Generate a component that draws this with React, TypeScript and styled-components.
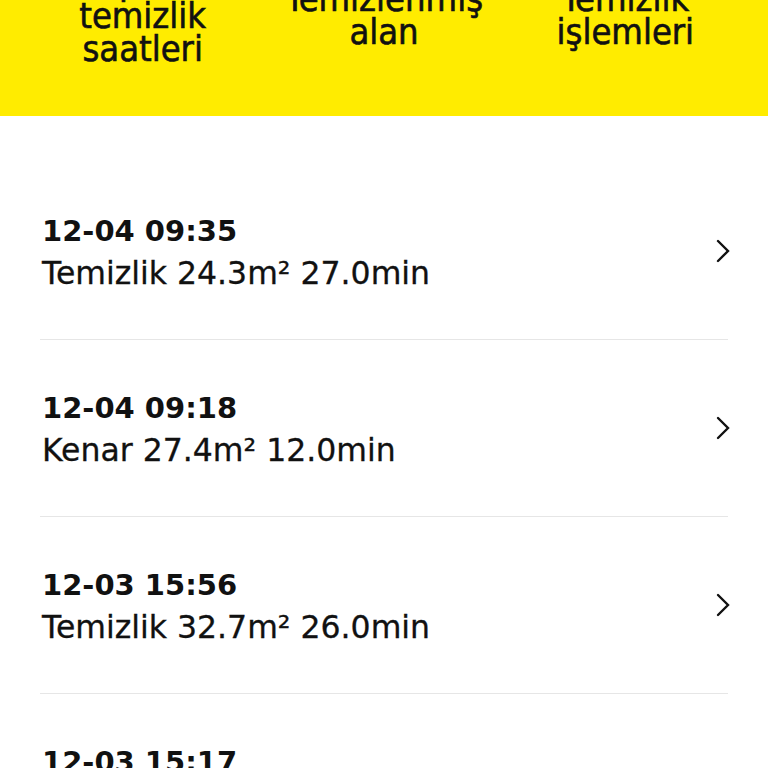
import styled, { createGlobalStyle } from 'styled-components';

const records = [
	{ time: '12-04 09:35', mode: 'Temizlik', area: '24.3', minutes: '27.0' },
	{ time: '12-04 09:18', mode: 'Kenar', area: '27.4', minutes: '12.0' },
	{ time: '12-03 15:56', mode: 'Temizlik', area: '32.7', minutes: '26.0' },
	{ time: '12-03 15:17', mode: 'Temizlik', area: '30.1', minutes: '25.0' },
];

const stats = [
	['Toplam', 'temizlik', 'saatleri'],
	['Temizlenmiş', 'alan'],
	['Temizlik', 'işlemleri'],
];

function Chevron() {
	return (
		<svg width="14" height="24" viewBox="0 0 14 24" fill="none">
			<path d="M2 2 L12 12 L2 22" stroke="#111" strokeWidth="2.4" strokeLinecap="round" strokeLinejoin="miter" />
		</svg>
	);
}

function App() {
	return (
		<>
			<GlobalStyle />
			<Page>
				<Header>
					<StatRow>
						{stats.map((lines, i) => (
							<StatLabel key={i}>
								{lines.map((l) => (
									<span key={l}>{l}</span>
								))}
							</StatLabel>
						))}
					</StatRow>
				</Header>
				<List>
					{records.map((r) => (
						<Row key={r.time}>
							<RowText>
								<Title>{r.time}</Title>
								<Detail>
									{r.mode} {r.area}m² {r.minutes}min
								</Detail>
							</RowText>
							<Chevron />
						</Row>
					))}
				</List>
			</Page>
		</>
	);
}

const GlobalStyle = createGlobalStyle`
	html, body {
		margin: 0;
		padding: 0;
		background: #fff;
		overflow: hidden;
	}
	body {
		font-family: 'DejaVu Sans', 'Noto Sans', sans-serif;
		color: #111;
	}
`;

const Page = styled.div`
	width: 768px;
	height: 768px;
	overflow: hidden;
	background: #fff;
`;

const Header = styled.header`
	background: #ffec00;
	padding: 0 22px 51px;
	overflow: hidden;
`;

const StatRow = styled.div`
	display: grid;
	grid-template-columns: repeat(3, 1fr);
	height: 100px;
	margin-top: -35px;
	align-items: center;
`;

const StatLabel = styled.div`
	display: flex;
	flex-direction: column;
	align-items: center;
	font-family: 'DejaVu Sans Condensed', 'DejaVu Sans', sans-serif;
	font-stretch: condensed;
	font-size: 36px;
	line-height: 33px;
	color: #111;
	-webkit-text-stroke: 0.6px #111;
	text-align: center;
`;

const List = styled.div`
	padding: 47px 40px 0;
`;

const Row = styled.div`
	display: flex;
	align-items: center;
	justify-content: space-between;
	height: 176px;
	border-bottom: 1px solid #e6e6e6;
	padding-left: 2px;
	svg {
		flex-shrink: 0;
		margin-right: -2px;
	}
`;

const RowText = styled.div`
	display: flex;
	flex-direction: column;
	margin-top: 4px;
`;

const Title = styled.div`
	font-weight: bold;
	font-size: 29px;
	line-height: 40px;
`;

const Detail = styled.div`
	font-size: 31.5px;
	line-height: 44px;
	-webkit-text-stroke: 0.3px #111;
`;

export default App;
